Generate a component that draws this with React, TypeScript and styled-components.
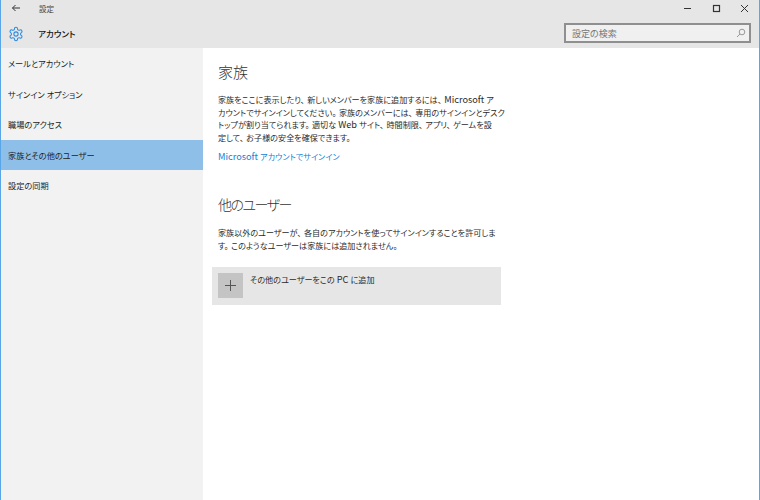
import React from "react";
import styled, { createGlobalStyle } from "styled-components";

const Global = createGlobalStyle`
  html, body { margin: 0; padding: 0; background: #fff; }
  body { font-family: "Noto Sans CJK JP", "Noto Sans", sans-serif; font-feature-settings: "palt" 1; }
`;
const Win = styled.div`
  width: 760px; height: 500px; box-sizing: border-box;
  border-left: 1px solid #5aa5e6; border-right: 1px solid #5aa5e6;
  display: flex; flex-direction: column; overflow: hidden; background: #fff;
`;
const Head = styled.header`
  height: 48px; background: #e6e6e6; display: flex; flex-direction: column; flex: none;
`;
const TitleBar = styled.div`
  height: 16px; display: flex; align-items: center; color: #444; font-size: 7.5px;
`;
const Back = styled.svg`
  width: 10px; height: 10px; margin-left: 10px; margin-right: 18px; flex: none;
`;
const Spacer = styled.div` flex: 1; `;
const WinBtn = styled.svg`
  width: 9px; height: 9px; margin-right: 19.5px; flex: none; &:last-child { margin-right: 10px; }
`;
const AppRow = styled.div`
  flex: 1; display: flex; align-items: center; padding: 0 8px 0 7px;
`;
const Gear = styled.svg` width: 16px; height: 16px; flex: none; margin-right: 14px; margin-top: 3px; `;
const AppTitle = styled.div`
  font-size: 8.5px; font-weight: 500; color: #111; flex: 1; margin-top: 1px;
`;
const Search = styled.div`
  width: 187px; height: 20px; box-sizing: border-box; border: 2px solid #8f8f8f; background: #f0f0f0;
  display: flex; align-items: center; justify-content: space-between; padding: 0 3px 0 6px;
  font-size: 9px; color: #777; margin-top: 2px;
`;
const Body = styled.div` flex: 1; display: flex; min-height: 0; `;
const Side = styled.nav`
  width: 202px; background: #f2f2f2; flex: none; display: flex; flex-direction: column;
`;
const NavItem = styled.div<{ $active?: boolean }>`
  height: 30.5px; display: flex; align-items: center; padding-left: 7px; font-size: 8.2px;
  color: #222; background: ${p => (p.$active ? "#8ebfe9" : "transparent")};
`;
const Main = styled.main` flex: 1; padding: 13px 0 0 15px; `;
const H2 = styled.h2`
  margin: 0; font-size: 15px; font-weight: 300; color: #333; line-height: 22px;
`;
const P = styled.p`
  margin: 11px 0 0; font-size: 8.1px; line-height: 12.7px; color: #2a2a2a; white-space: nowrap;
`;
const Latin = styled.span` font-size: 9.2px; line-height: 1; `;
const Punct = styled.span` padding-right: 2.5px; `;
const A = styled.div` margin-top: 5px; font-size: 8.1px; line-height: 13px; color: #0f7fd8; `;
const H2b = styled(H2)` margin-top: 30px; font-size: 14px; letter-spacing: -1.5px; `;
const P2 = styled(P)` margin-top: 12px; `;
const AddRow = styled.div`
  margin: 15px 0 0 -6px; width: 289px; height: 38px; background: #e6e6e6; display: flex; padding: 6px; box-sizing: border-box;
`;
const Plus = styled.div`
  width: 25px; height: 25px; background: #c4c4c4; flex: none; display: flex; align-items: center; justify-content: center;
`;
const AddText = styled.div` margin-left: 7px; font-size: 8.1px; line-height: 13px; color: #2a2a2a; `;

export default function App() {
  return (
    <Win>
      <Global />
      <Head>
        <TitleBar>
          <Back viewBox="0 0 10 10" fill="none" stroke="#333" strokeWidth="1">
            <path d="M9 5H1.5M4.5 2 1.5 5l3 3" />
          </Back>
          <span>設定</span>
          <Spacer />
          <WinBtn viewBox="0 0 9 9" stroke="#333" fill="none"><path d="M1 4.5h7" /></WinBtn>
          <WinBtn viewBox="0 0 9 9" stroke="#333" fill="none"><rect x="1.5" y="1.5" width="6" height="6" strokeWidth="1.2" /></WinBtn>
          <WinBtn viewBox="0 0 9 9" stroke="#333" fill="none"><path d="M1 1l7 7M8 1 1 8" /></WinBtn>
        </TitleBar>
        <AppRow>
          <Gear viewBox="0 0 24 24" fill="none" stroke="#2b8ce0" strokeWidth="1.6" strokeLinejoin="round">
            <path d="M12.22 2h-.44a2 2 0 0 0-2 2v.18a2 2 0 0 1-1 1.73l-.43.25a2 2 0 0 1-2 0l-.15-.08a2 2 0 0 0-2.73.73l-.22.38a2 2 0 0 0 .73 2.73l.15.1a2 2 0 0 1 1 1.72v.51a2 2 0 0 1-1 1.74l-.15.09a2 2 0 0 0-.73 2.73l.22.38a2 2 0 0 0 2.73.73l.15-.08a2 2 0 0 1 2 0l.43.25a2 2 0 0 1 1 1.73V20a2 2 0 0 0 2 2h.44a2 2 0 0 0 2-2v-.18a2 2 0 0 1 1-1.73l.43-.25a2 2 0 0 1 2 0l.15.08a2 2 0 0 0 2.73-.73l.22-.39a2 2 0 0 0-.73-2.73l-.15-.08a2 2 0 0 1-1-1.74v-.5a2 2 0 0 1 1-1.74l.15-.09a2 2 0 0 0 .73-2.73l-.22-.38a2 2 0 0 0-2.73-.73l-.15.08a2 2 0 0 1-2 0l-.43-.25a2 2 0 0 1-1-1.73V4a2 2 0 0 0-2-2z" />
            <circle cx="12" cy="12" r="3.2" />
          </Gear>
          <AppTitle>アカウント</AppTitle>
          <Search>
            <span>設定の検索</span>
            <svg width="10" height="10" viewBox="0 0 10 10" fill="none" stroke="#999" strokeWidth="1">
              <circle cx="6" cy="4" r="2.8" />
              <path d="M4 6 1 9" />
            </svg>
          </Search>
        </AppRow>
      </Head>
      <Body>
        <Side>
          <NavItem>メールとアカウント</NavItem>
          <NavItem>サインイン オプション</NavItem>
          <NavItem>職場のアクセス</NavItem>
          <NavItem $active>家族とその他のユーザー</NavItem>
          <NavItem>設定の同期</NavItem>
        </Side>
        <Main>
          <H2>家族</H2>
          <P>
            家族をここに表示したり<Punct>、</Punct>新しいメンバーを家族に追加するには<Punct>、</Punct><Latin>Microsoft </Latin>ア<br />
            カウントでサインインしてください<Punct>。</Punct>家族のメンバーには<Punct>、</Punct>専用のサインインとデスク<br />
            トップが割り当てられます<Punct>。</Punct>適切な<Latin> Web </Latin>サイト<Punct>、</Punct>時間制限<Punct>、</Punct>アプリ<Punct>、</Punct>ゲームを設<br />
            定して<Punct>、</Punct>お子様の安全を確保できます<Punct>。</Punct>
          </P>
          <A><Latin>Microsoft </Latin>アカウントでサインイン</A>
          <H2b>他のユーザー</H2b>
          <P2>
            家族以外のユーザーが<Punct>、</Punct>各自のアカウントを使ってサインインすることを許可しま<br />
            す<Punct>。</Punct>このようなユーザーは家族には追加されません<Punct>。</Punct>
          </P2>
          <AddRow>
            <Plus>
              <svg width="11" height="11" viewBox="0 0 11 11" stroke="#555" strokeWidth="1"><path d="M5.5 0v11M0 5.5h11" /></svg>
            </Plus>
            <AddText>その他のユーザーをこの<Latin> PC </Latin>に追加</AddText>
          </AddRow>
        </Main>
      </Body>
    </Win>
  );
}
